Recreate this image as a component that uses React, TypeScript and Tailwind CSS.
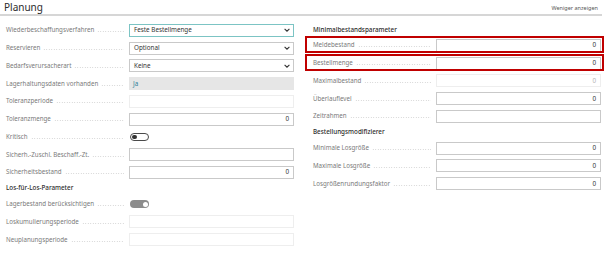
import React from "react";

type FieldKind = "select" | "text" | "number" | "readonly" | "faint" | "faintNum" | "toggleOff" | "toggleOnDisabled";

type Row = {
  label: string;
  kind: FieldKind;
  value?: string;
  focused?: boolean;
  highlight?: boolean;
};

const Chevron = () => (
  <svg width="6" height="4" viewBox="0 0 6 4" className="shrink-0">
    <path d="M0.6 0.8 L3 3.2 L5.4 0.8" fill="none" stroke="#333" strokeWidth="1.1" />
  </svg>
);

function Field({ row }: { row: Row }) {
  const base = "h-[13px] w-[165px] shrink-0 flex items-center text-[6.3px] leading-none";
  switch (row.kind) {
    case "select":
      return (
        <div
          className={`${base} justify-between pl-[4px] pr-[3px] bg-white border ${
            row.focused ? "border-[#7cc4c4]" : "border-[#c9c9c9]"
          } text-[#333]`}
        >
          <span>{row.value}</span>
          <Chevron />
        </div>
      );
    case "number":
      return (
        <div className={`${base} justify-end pr-[4px] bg-white border border-[#c9c9c9] text-[#333]`}>
          {row.value}
        </div>
      );
    case "text":
      return <div className={`${base} bg-white border border-[#c9c9c9]`} />;
    case "readonly":
      return (
        <div className={`${base} pl-[4px] bg-[#e6e6e6] text-[#2f7f96]`}>{row.value}</div>
      );
    case "faint":
      return <div className={`${base} bg-white border border-[#eeeeee]`} />;
    case "faintNum":
      return (
        <div className={`${base} justify-end pr-[4px] bg-white border border-[#eeeeee] text-[#b3b3b3]`}>
          {row.value}
        </div>
      );
    case "toggleOff":
      return (
        <div className="h-[13px] w-[165px] shrink-0 flex items-center pl-[1px]">
          <div className="relative h-[8px] w-[19px] rounded-full border-[1.3px] border-[#4a4a4a] bg-white">
            <div className="absolute left-[1.3px] top-[1px] h-[4.5px] w-[4.5px] rounded-full bg-[#333]" />
          </div>
        </div>
      );
    case "toggleOnDisabled":
      return (
        <div className="h-[13px] w-[165px] shrink-0 flex items-center pl-[1px]">
          <div className="relative h-[8px] w-[19px] rounded-full bg-[#8c8c8c]">
            <div className="absolute right-[1.5px] top-[1.5px] h-[5px] w-[5px] rounded-full bg-white" />
          </div>
        </div>
      );
  }
}

function FieldRow({ row }: { row: Row }) {
  return (
    <div className="relative flex h-[17.75px] items-center">
      {row.highlight && (
        <div className="absolute -left-[8px] -right-[3px] top-[-0.5px] bottom-[1px] border-2 border-[#c00000]" />
      )}
      <div className="flex w-[123px] shrink-0 items-center pr-[5px]">
        <span className="whitespace-nowrap text-[6.2px] leading-none text-[#7a7a7a]">{row.label}</span>
        <div className="ml-[3px] mt-[3px] h-[1px] flex-1 bg-[radial-gradient(circle,#cfcfcf_0.5px,transparent_0.7px)] bg-[length:2.5px_1px]" />
      </div>
      <Field row={row} />
    </div>
  );
}

function Heading({ children, top }: { children: React.ReactNode; top?: boolean }) {
  return (
    <div
      className={`flex ${top ? "h-[15px] pt-[1.5px]" : "h-[14px] pt-[0.5px]"} items-center text-[6.3px] font-medium leading-none text-[#2b2b2b]`}
    >
      {children}
    </div>
  );
}

const leftA: Row[] = [
  { label: "Wiederbeschaffungsverfahren", kind: "select", value: "Feste Bestellmenge", focused: true },
  { label: "Reservieren", kind: "select", value: "Optional" },
  { label: "Bedarfsverursacherart", kind: "select", value: "Keine" },
  { label: "Lagerhaltungsdaten vorhanden", kind: "readonly", value: "Ja" },
  { label: "Toleranzperiode", kind: "faint" },
  { label: "Toleranzmenge", kind: "number", value: "0" },
  { label: "Kritisch", kind: "toggleOff" },
  { label: "Sicherh.-Zuschl. Beschaff.-Zt.", kind: "text" },
  { label: "Sicherheitsbestand", kind: "number", value: "0" },
];

const leftB: Row[] = [
  { label: "Lagerbestand berücksichtigen", kind: "toggleOnDisabled" },
  { label: "Loskumulierungsperiode", kind: "faint" },
  { label: "Neuplanungsperiode", kind: "faint" },
];

const rightA: Row[] = [
  { label: "Meldebestand", kind: "number", value: "0", highlight: true },
  { label: "Bestellmenge", kind: "number", value: "0", highlight: true },
  { label: "Maximalbestand", kind: "faintNum", value: "0" },
  { label: "Überlauflevel", kind: "number", value: "0" },
  { label: "Zeitrahmen", kind: "text" },
];

const rightB: Row[] = [
  { label: "Minimale Losgröße", kind: "number", value: "0" },
  { label: "Maximale Losgröße", kind: "number", value: "0" },
  { label: "Losgrößenrundungsfaktor", kind: "number", value: "0" },
];

export default function App() {
  return (
    <div
      className="h-[264px] w-[605px] overflow-hidden bg-white"
      style={{ fontFamily: '"Noto Sans", "Open Sans", sans-serif' }}
    >
      <div className="mr-[3px] flex h-[16px] items-end justify-between border-b-2 border-[#d6d6d6]">
        <div className="pb-[1px] pl-[4px] text-[10px] leading-[12px] text-[#2b2b2b]">Planung</div>
        <div className="pb-[3px] pr-[4px] text-[5.5px] leading-none text-[#555]">Weniger anzeigen</div>
      </div>
      <div className="flex gap-[19px] pl-[6px] pr-[4px] pt-[5.6px]">
        <div className="w-[288px]">
          {leftA.map((r) => (
            <FieldRow key={r.label} row={r} />
          ))}
          <Heading>Los-für-Los-Parameter</Heading>
          {leftB.map((r) => (
            <FieldRow key={r.label} row={r} />
          ))}
        </div>
        <div className="w-[288px]">
          <Heading top>Minimalbestandsparameter</Heading>
          {rightA.map((r) => (
            <FieldRow key={r.label} row={r} />
          ))}
          <Heading>Bestellungsmodifizierer</Heading>
          {rightB.map((r) => (
            <FieldRow key={r.label} row={r} />
          ))}
        </div>
      </div>
    </div>
  );
}
